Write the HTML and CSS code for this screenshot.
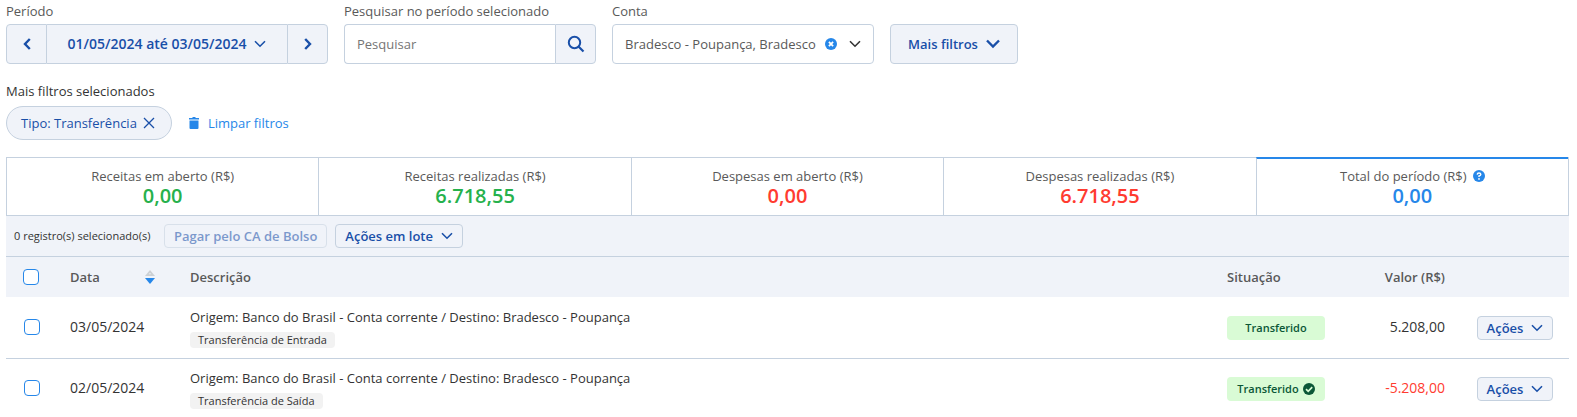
FILE: index.html
```html
<!DOCTYPE html>
<html lang="pt-BR">
<head>
  <meta charset="UTF-8">
  <meta name="viewport" content="width=device-width, initial-scale=1.0">
  <title>Extrato de movimentações</title>
  <link rel="stylesheet" href="styles.css">
</head>
<body>
  <!-- shared icons -->
  <svg class="sprite" aria-hidden="true">
    <symbol id="chevron" viewBox="0 0 12 8"><path d="M1 1.2l5 5 5-5" fill="none" stroke="currentColor" stroke-width="1.6"/></symbol>
  </svg>

  <div class="filters">
    <div class="field">
      <span class="label" id="periodo">Período</span>
      <div class="period" role="group" aria-labelledby="periodo">
        <button class="arrow" aria-label="Período anterior"><svg width="8" height="12" viewBox="0 0 8 12"><path d="M6.8 1L2 6l4.800 5" fill="none" stroke="currentColor" stroke-width="2.400"/></svg></button>
        <button class="range">01/05/2024 até 03/05/2024 <svg width="12" height="8"><use href="#chevron"/></svg></button>
        <button class="arrow" aria-label="Próximo período"><svg width="8" height="12" viewBox="0 0 8 12"><path d="M1.200 1L6 6l-4.800 5" fill="none" stroke="currentColor" stroke-width="2.400"/></svg></button>
      </div>
    </div>

    <div class="field">
      <label class="label" for="busca">Pesquisar no período selecionado</label>
      <div class="search">
        <input type="text" id="busca" placeholder="Pesquisar">
        <button aria-label="Pesquisar"><svg width="18" height="18" viewBox="0 0 18 18"><circle cx="7.500" cy="7.500" r="5.700" fill="none" stroke="currentColor" stroke-width="2"/><path d="M11.500 11.500l5 5" stroke="currentColor" stroke-width="2.200"/></svg></button>
      </div>
    </div>

    <div class="field">
      <label class="label" for="conta">Conta</label>
      <div class="account">
        <select id="conta">
          <option>Bradesco - Poupança, Bradesco</option>
        </select>
        <button class="clear" aria-label="Limpar conta"><svg width="12" height="12" viewBox="0 0 12 12"><circle cx="6" cy="6" r="6" fill="currentColor"/><path d="M3.900 3.900l4.200 4.200M8.100 3.900L3.900 8.100" stroke="#fff" stroke-width="1.800"/></svg></button>
        <svg width="12" height="8"><use href="#chevron"/></svg>
      </div>
    </div>

    <button class="more">Mais filtros <svg width="14" height="10" viewBox="0 0 14 10"><path d="M1 1.500l6 6 6-6" fill="none" stroke="currentColor" stroke-width="2.400"/></svg></button>
  </div>

  <div class="selected-title">Mais filtros selecionados</div>
  <div class="selected">
    <button class="chip">Tipo: Transferência <svg width="12" height="12" viewBox="0 0 12 12"><path d="M1 1l10 10M11 1L1 11" stroke="currentColor" stroke-width="1.300"/></svg></button>
    <a class="clear-filters" href="#"><svg width="12" height="12" viewBox="0 0 12 12"><path d="M1 1h3l1-1h2l1 1h3v1.500H1zM1.500 3.500h9V11q0 1-1 1h-7q-1 0-1-1z" fill="currentColor"/></svg> Limpar filtros</a>
  </div>

  <div class="totals">
    <div class="total green"><span>Receitas em aberto (R$)</span><strong>0,00</strong></div>
    <div class="total green"><span>Receitas realizadas (R$)</span><strong>6.718,55</strong></div>
    <div class="total red"><span>Despesas em aberto (R$)</span><strong>0,00</strong></div>
    <div class="total red"><span>Despesas realizadas (R$)</span><strong>6.718,55</strong></div>
    <div class="total blue active">
      <span>Total do período (R$)
        <svg width="12" height="12" viewBox="0 0 12 12"><circle cx="6" cy="6" r="6" fill="#2687e9"/><path d="M4.200 4.600Q4.300 3 6 3t1.800 1.400Q7.800 5.300 6 6v1" fill="none" stroke="#fff" stroke-width="1.400"/><circle cx="6" cy="8.900" r=".9" fill="#fff"/></svg>
      </span>
      <strong>0,00</strong>
    </div>
  </div>

  <div class="toolbar">
    <span class="count">0 registro(s) selecionado(s)</span>
    <button class="small" disabled>Pagar pelo CA de Bolso</button>
    <button class="small">Ações em lote <svg width="12" height="8"><use href="#chevron"/></svg></button>
  </div>

  <table>
    <colgroup>
      <col class="col-check">
      <col class="col-date">
      <col>
      <col class="col-status">
      <col class="col-value">
      <col class="col-actions">
    </colgroup>
    <thead>
      <tr>
        <th class="check"><input type="checkbox" aria-label="Selecionar todos"></th>
        <th>
          <div class="sortable">Data
            <svg width="10" height="14" viewBox="0 0 10 14"><path d="M5 0l5 6H0z" fill="#ccd0d4"/><circle cx="5" cy="3.800" r=".7" fill="#f0f3f9"/><path d="M0 8h10l-5 6z" fill="#2687e9"/></svg>
          </div>
        </th>
        <th>Descrição</th>
        <th>Situação</th>
        <th class="value">Valor (R$)</th>
        <th></th>
      </tr>
    </thead>
    <tbody>
      <tr>
        <td class="check"><input type="checkbox" aria-label="Selecionar 03/05/2024"></td>
        <td class="date">03/05/2024</td>
        <td>
          <div class="desc">Origem: Banco do Brasil - Conta corrente / Destino: Bradesco - Poupança</div>
          <span class="tag">Transferência de Entrada</span>
        </td>
        <td class="situation"><span class="status">Transferido</span></td>
        <td class="value">5.208,00</td>
        <td class="actions"><button class="small">Ações <svg width="12" height="8"><use href="#chevron"/></svg></button></td>
      </tr>
      <tr>
        <td class="check"><input type="checkbox" aria-label="Selecionar 02/05/2024"></td>
        <td class="date">02/05/2024</td>
        <td>
          <div class="desc">Origem: Banco do Brasil - Conta corrente / Destino: Bradesco - Poupança</div>
          <span class="tag">Transferência de Saída</span>
        </td>
        <td class="situation"><span class="status">Transferido <svg width="12" height="12" viewBox="0 0 12 12"><circle cx="6" cy="6" r="6" fill="currentColor"/><path d="M3 6.200l2.200 2.200L9.200 4.200" fill="none" stroke="#d9fbd5" stroke-width="1.700"/></svg></span></td>
        <td class="value negative">-5.208,00</td>
        <td class="actions"><button class="small">Ações <svg width="12" height="8"><use href="#chevron"/></svg></button></td>
      </tr>
    </tbody>
  </table>
</body>
</html>
```
FILE: styles.css
```css
* {
  box-sizing: border-box;
}

body {
  margin: 0;
  padding: 1px 8px 0 6px;
  font-family: "Open Sans", "Noto Sans", sans-serif;
  font-size: 13px;
  line-height: 20px;
  color: #333;
  background: #fff;
}

button, input, select {
  font: inherit;
  margin: 0;
}

button {
  display: inline-flex;
  align-items: center;
  justify-content: center;
  padding: 0;
  border: 1px solid #c5d1df;
  border-radius: 4px;
  background: #f0f3f9;
  color: #194fa8;
  font-weight: 600;
  cursor: pointer;
}

svg {
  flex: none;
}

.sprite {
  display: none;
}

.filters {
  display: flex;
  align-items: flex-end;
  gap: 16px;
}

.label {
  display: block;
  margin-bottom: 3px;
  color: #595959;
}

.period, .search, .account {
  display: flex;
  height: 40px;
}

.period {
  width: 322px;
}

.arrow {
  width: 41px;
}

.arrow:first-child {
  border-radius: 4px 0 0 4px;
}

.arrow:last-child {
  border-radius: 0 4px 4px 0;
}

.range {
  flex: 1;
  gap: 8px;
  border-width: 1px 0;
  border-radius: 0;
  font-size: 14px;
}

.search {
  width: 252px;
}

.search input {
  flex: 1;
  min-width: 0;
  padding: 0 12px;
  border: 1px solid #c5d1df;
  border-right: 0;
  border-radius: 4px 0 0 4px;
}

.search input::placeholder {
  color: #757575;
}

.search button {
  width: 41px;
  border-radius: 0 4px 4px 0;
}

.account {
  width: 262px;
  align-items: center;
  padding: 0 12px;
  border: 1px solid #c5d1df;
  border-radius: 4px;
}

.account select {
  flex: 1;
  min-width: 0;
  padding: 0;
  border: 0;
  appearance: none;
  background: none;
  color: #595959;
}

.account .clear {
  margin: 0 12px 0 4px;
  border: 0;
  background: none;
  color: #2687e9;
}

.more {
  width: 128px;
  height: 40px;
  gap: 8px;
}

.selected-title {
  margin-top: 17px;
}

.selected {
  display: flex;
  align-items: center;
  gap: 16px;
  margin: 5px 0 17px;
}

.chip {
  height: 34px;
  gap: 6px;
  padding: 0 16px 1px 14px;
  border-radius: 17px;
  font-weight: 400;
}

.clear-filters {
  display: flex;
  align-items: center;
  gap: 8px;
  padding-bottom: 1px;
  color: #2687e9;
  text-decoration: none;
}

.totals {
  display: grid;
  grid-template-columns: repeat(5, 1fr);
  border: solid #c5d1df;
  border-width: 0 1px 1px 0;
}

.total {
  display: flex;
  flex-direction: column;
  align-items: center;
  height: 58px;
  padding-top: 8px;
  border-top: 1px solid #c5d1df;
  border-left: 1px solid #c5d1df;
}

.total.active {
  padding-top: 7px;
  border-top: 2px solid #2687e9;
}

.total span {
  display: flex;
  align-items: center;
  gap: 6px;
  color: #595959;
}

.total strong {
  font-size: 20px;
  font-weight: 600;
}

.green strong {
  color: #26b14c;
}

.red strong, .negative {
  color: #ff3b30;
}

.blue strong {
  color: #2687e9;
}

.toolbar {
  display: flex;
  align-items: center;
  gap: 8px;
  height: 40px;
  padding: 0 8px;
  background: #f0f3f9;
}

.count {
  min-width: 142px;
  font-size: 11px;
}

.small {
  height: 24px;
  padding: 0 9px;
  gap: 8px;
}

.small:disabled {
  opacity: 0.55;
}

table {
  width: 100%;
  table-layout: fixed;
  border-collapse: separate;
  border-spacing: 0;
}

.col-check {
  width: 50px;
}

.col-date {
  width: 120px;
}

.col-status {
  width: 126px;
}

.col-value {
  width: 120px;
}

.col-actions {
  width: 110px;
}

th, td {
  padding: 0 14px;
  border-top: 1px solid #c5d1df;
  text-align: left;
}

th {
  height: 41px;
  background: #f0f3f9;
  color: #595959;
  font-weight: 600;
}

td {
  height: 61px;
  padding-bottom: 2px;
}

tbody tr:first-child td {
  border-top-color: transparent;
}

th.check {
  padding: 0 0 0 17px;
}

td.check {
  padding: 0 0 2px 18px;
}

.check input {
  display: block;
  width: 16px;
  height: 16px;
  border: 1px solid #2687e9;
  border-radius: 4px;
  appearance: none;
  background: #fff;
}

.sortable {
  display: flex;
  align-items: center;
  justify-content: space-between;
  padding-right: 7px;
}

.value {
  text-align: right;
}

.date, td.value {
  font-size: 14px;
}

.desc {
  white-space: nowrap;
}

.tag {
  display: block;
  width: fit-content;
  margin-top: 5px;
  padding: 0 8px;
  border-radius: 4px;
  background: #f2f2f2;
  font-size: 11px;
  line-height: 16px;
}

.situation {
  padding-bottom: 0;
}

.status {
  display: flex;
  align-items: center;
  justify-content: center;
  gap: 4px;
  height: 24px;
  border-radius: 4px;
  background: #d9fbd5;
  color: #0b5737;
  font-size: 11px;
  font-weight: 600;
}

.actions {
  padding: 0 16px 0 18px;
}

.actions .small {
  width: 76px;
}
```
